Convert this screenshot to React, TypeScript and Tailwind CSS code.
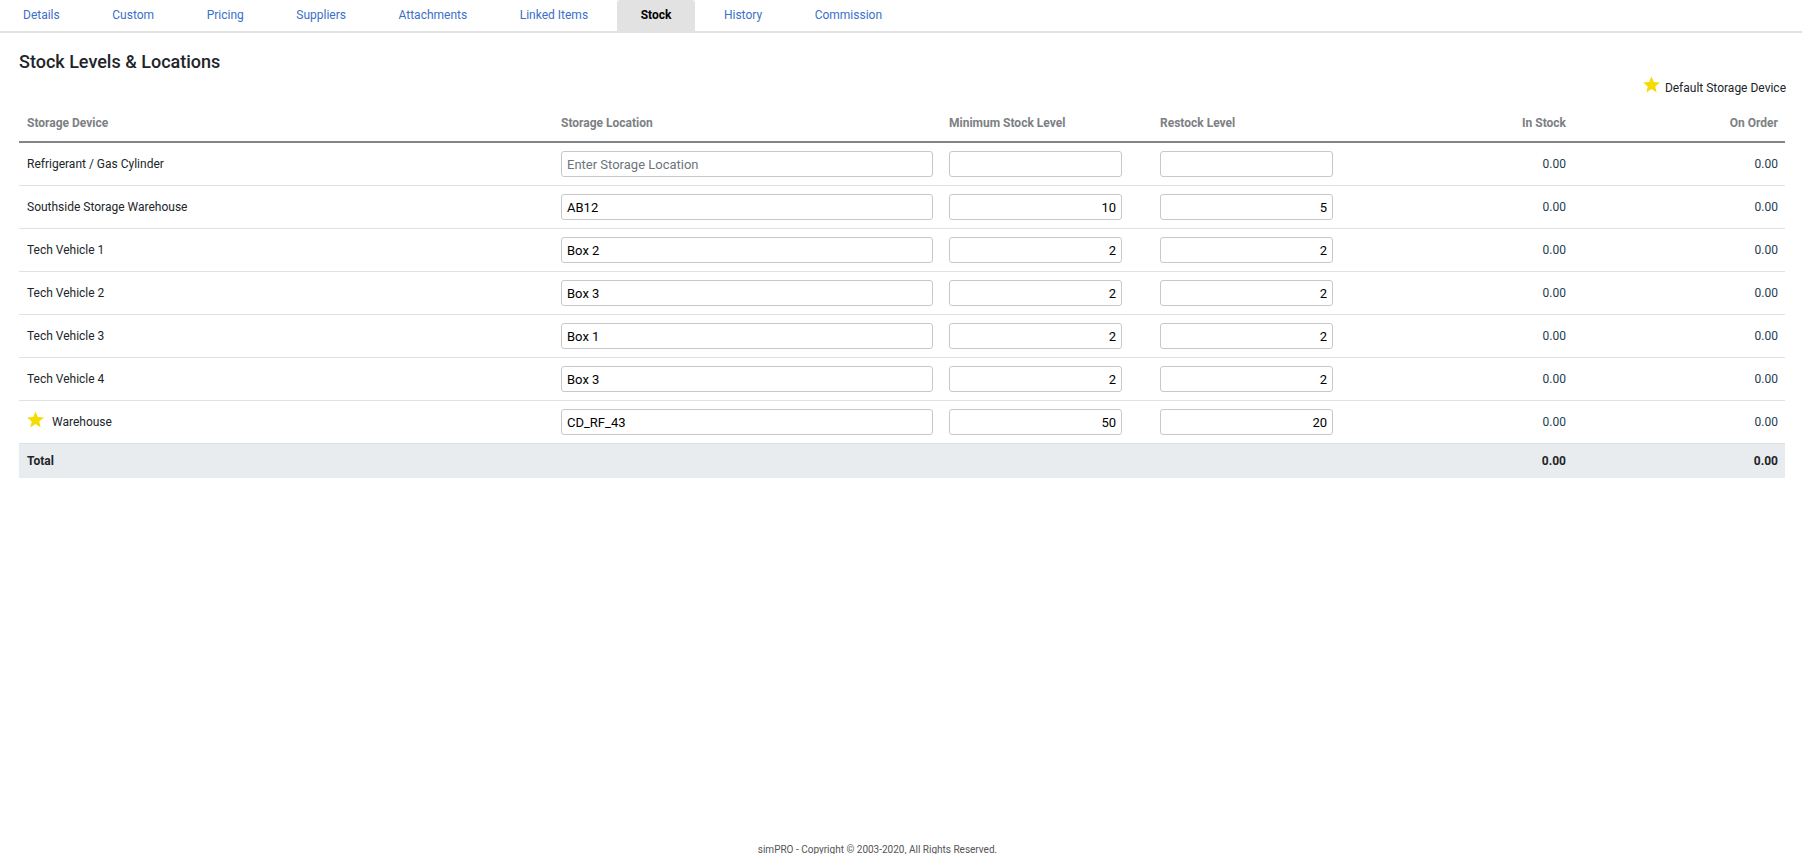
const tabs = ["Details", "Custom", "Pricing", "Suppliers", "Attachments", "Linked Items", "Stock", "History", "Commission"];
const rows = [
  { name: "Refrigerant / Gas Cylinder", loc: "", min: "", re: "" },
  { name: "Southside Storage Warehouse", loc: "AB12", min: "10", re: "5" },
  { name: "Tech Vehicle 1", loc: "Box 2", min: "2", re: "2" },
  { name: "Tech Vehicle 2", loc: "Box 3", min: "2", re: "2" },
  { name: "Tech Vehicle 3", loc: "Box 1", min: "2", re: "2" },
  { name: "Tech Vehicle 4", loc: "Box 3", min: "2", re: "2" },
  { name: "Warehouse", loc: "CD_RF_43", min: "50", re: "20", star: true },
];

function Star({ cls }: { cls: string }) {
  return (
    <svg viewBox="0 0 24 24" className={cls + " shrink-0 fill-[#f5dc00]"}>
      <path d="M12 .6l3.3 7.9 8.5.7-6.5 5.6 2 8.4L12 18.4l-7.3 4.8 2-8.4L.2 9.2l8.5-.7z" />
    </svg>
  );
}

const inputCls = "block h-[26px] border border-[#c8c8c8] rounded-[3px] px-[5px] pt-px text-[13px] text-black bg-white outline-none placeholder:text-[#6c757d]";

export default function App() {
  return (
    <div className="h-[854px] overflow-hidden bg-white flex flex-col font-['Roboto',sans-serif] text-[12px] text-[#212529]">
      <nav className="flex gap-[4.55px] h-[33px] border-b-2 border-[#e2e2e2] -ml-px">
        {tabs.map((t) => (
          <div
            key={t}
            className={
              t === "Stock"
                ? "h-[31px] px-6 pb-px flex items-center text-[12px] font-bold text-black bg-[#e2e2e2] rounded-t-[3px]"
                : "h-[31px] px-6 pb-px flex items-center text-[12px] text-[#3b6fc9]"
            }
          >
            {t}
          </div>
        ))}
      </nav>
      <main className="px-[19px] flex-1">
        <h1 className="text-[18px] leading-[24px] font-medium text-[#212529] mt-[17px]">Stock Levels &amp; Locations</h1>
        <div className="flex justify-end items-center gap-[5px] h-[20px] mt-[3px] -mr-[3px]">
          <span className="-mt-[5px]"><Star cls="w-[17px] h-[17px]" /></span>
          <span className="text-[12px] mt-[1px]">Default Storage Device</span>
        </div>
        <table className="w-[1766px] table-fixed border-collapse">
          <colgroup>
            <col className="w-[534px]" />
            <col className="w-[388px]" />
            <col className="w-[211px]" />
            <col className="w-[209px]" />
            <col className="w-[212px]" />
            <col className="w-[212px]" />
          </colgroup>
          <thead>
            <tr className="h-[45px] border-b-[2px] border-[#82868a] text-[#7c8084] text-[12px] font-bold">
              <th className="text-left px-2 pt-[7px] font-bold">Storage Device</th>
              <th className="text-left px-2 pt-[7px] font-bold">Storage Location</th>
              <th className="text-left px-2 pt-[7px] font-bold">Minimum Stock Level</th>
              <th className="text-left px-2 pt-[7px] font-bold">Restock Level</th>
              <th className="text-right pl-2 pr-[7px] pt-[7px] font-bold">In Stock</th>
              <th className="text-right pl-2 pr-[7px] pt-[7px] font-bold">On Order</th>
            </tr>
          </thead>
          <tbody>
            {rows.map((r) => (
              <tr key={r.name} className="h-[43px] border-b border-[#dee2e6]">
                <td className="px-2">
                  {r.star ? (
                    <div className="flex items-center gap-[8px]">
                      <span className="-mt-[4px]"><Star cls="w-[17px] h-[17px]" /></span>
                      <span className="mt-px">{r.name}</span>
                    </div>
                  ) : (
                    r.name
                  )}
                </td>
                <td className="px-2">
                  <input readOnly value={r.loc} placeholder={r.loc ? undefined : "Enter Storage Location"} className={inputCls + " w-[372px]"} />
                </td>
                <td className="px-2">
                  <input readOnly value={r.min} className={inputCls + " w-[173px] text-right"} />
                </td>
                <td className="px-2">
                  <input readOnly value={r.re} className={inputCls + " w-[173px] text-right"} />
                </td>
                <td className="pl-2 pr-[7px] text-right text-[#233c50]">0.00</td>
                <td className="pl-2 pr-[7px] text-right text-[#233c50]">0.00</td>
              </tr>
            ))}
            <tr className="h-[35px] bg-[#e9ecef] font-bold">
              <td className="px-2">Total</td>
              <td />
              <td />
              <td />
              <td className="pl-2 pr-[7px] text-right">0.00</td>
              <td className="pl-2 pr-[7px] text-right">0.00</td>
            </tr>
          </tbody>
        </table>
      </main>
      <footer className="text-center text-[10px] leading-[12px] text-[#555] h-[10px] pr-[47px]">
        simPRO - Copyright © 2003-2020, All Rights Reserved.
      </footer>
    </div>
  );
}
